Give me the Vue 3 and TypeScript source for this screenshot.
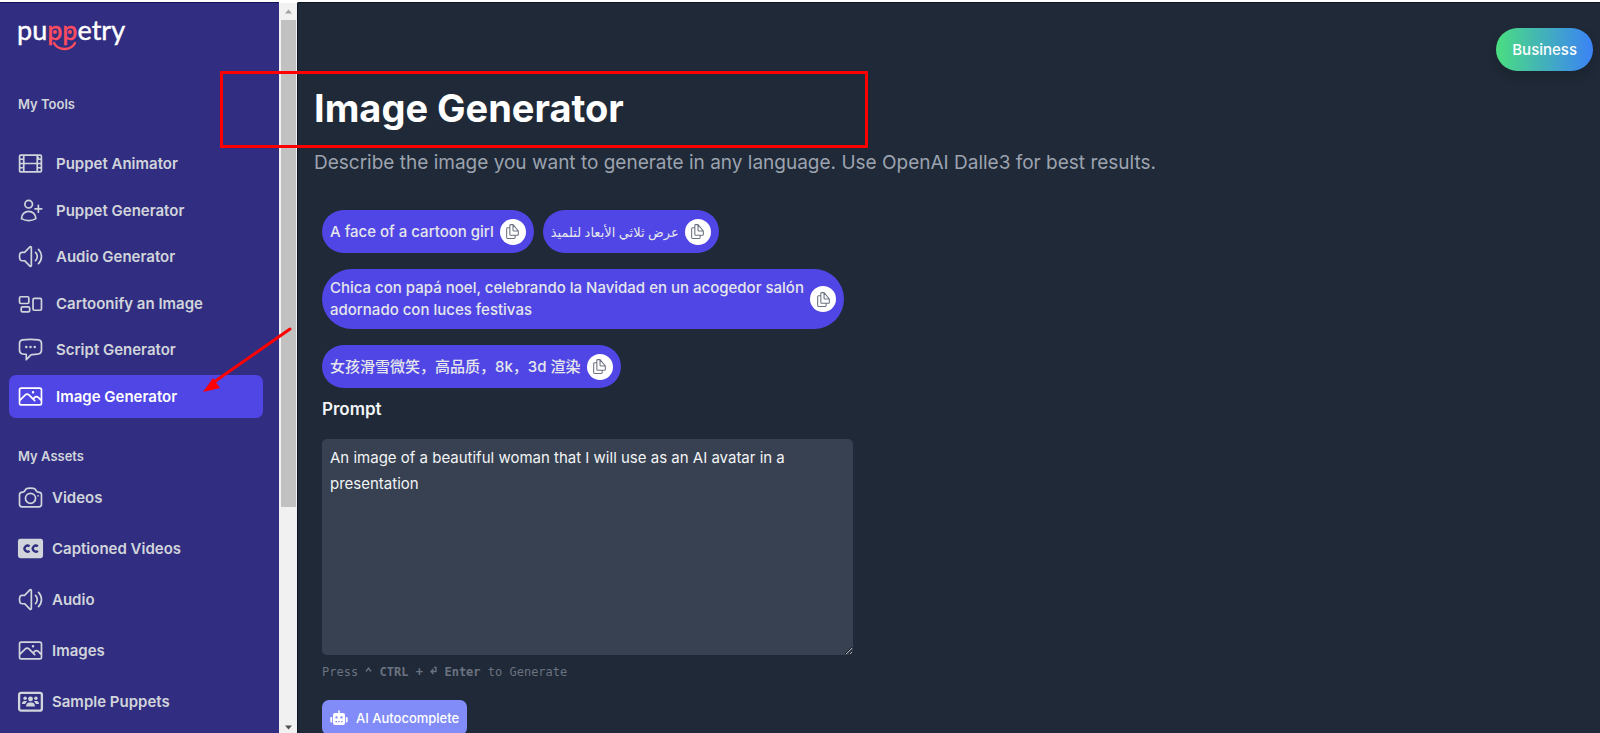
<script setup lang="ts">
import { ref } from 'vue'

interface NavItem {
  label: string
  icon: string
}

interface Suggestion {
  text: string
  lang: string
}

const tools: NavItem[] = [
  { label: 'Puppet Animator', icon: 'film' },
  { label: 'Puppet Generator', icon: 'userPlus' },
  { label: 'Audio Generator', icon: 'speaker' },
  { label: 'Cartoonify an Image', icon: 'group' },
  { label: 'Script Generator', icon: 'chat' },
  { label: 'Image Generator', icon: 'photo' },
]

const assets: NavItem[] = [
  { label: 'Videos', icon: 'camera' },
  { label: 'Captioned Videos', icon: 'captions' },
  { label: 'Audio', icon: 'speaker' },
  { label: 'Images', icon: 'photo' },
  { label: 'Sample Puppets', icon: 'people' },
]

const outlines: Record<string, string> = {
  film: 'M3.4 19.5h17.2M3.4 19.5a1.1 1.1 0 0 1-1.1-1.1M3.4 19.5h1.5c.6 0 1.1-.5 1.1-1.1M2.3 18.4V5.6m0 12.8v-1.5c0-.6.5-1.1 1.1-1.1m17.2 3.7a1.1 1.1 0 0 0 1.1-1.1m-1.1 1.1h-1.5a1.1 1.1 0 0 1-1.1-1.1m3.7 0V5.6m0 12.8v-1.5c0-.6-.5-1.1-1.1-1.1M21.7 5.6c0-.6-.5-1.1-1.1-1.1H3.4c-.6 0-1.1.5-1.1 1.1m19.4 0v1.5c0 .6-.5 1.1-1.1 1.1M2.3 5.6v1.5c0 .6.5 1.1 1.1 1.1m0 0h1.5m-1.5 0c-.6 0-1.1.5-1.1 1.1v1.6c0 .6.5 1.1 1.1 1.1m1.5-3.8c.6 0 1.1-.5 1.1-1.1V5.6M4.9 8.2c.6 0 1.1.5 1.1 1.1v1.6c0 .6-.5 1.1-1.1 1.1M6 5.6v5.3m0-5.3c0-.6.5-1.1 1.1-1.1M6 10.9c0 .6.5 1.1 1.1 1.1M6 10.9c0 .6-.5 1.1-1.1 1.1M6 10.9v2.2m1.1-8.6h9.8M18 5.6v5.3M7.1 12h9.8m-9.8 0c-.6 0-1.1.5-1.1 1.1M18 10.9c0 .6-.5 1.1-1.1 1.1M18 10.9c0 .6.5 1.1 1.1 1.1M18 5.6c0 .6.5 1.1 1.1 1.1M18 10.9v2.2m2.6-4.9h-1.5m1.5 0c.6 0 1.1.5 1.1 1.1v1.6c0 .6-.5 1.1-1.1 1.1m-1.5-3.8c-.6 0-1.1.5-1.1 1.1v1.6c0 .6.5 1.1 1.1 1.1m1.5 0h-1.5M3.4 12h1.5m-1.5 0c-.6 0-1.1.5-1.1 1.1v1.6c0 .6.5 1.1 1.1 1.1M4.9 12c.6 0 1.1.5 1.1 1.1m0 5.3v-5.3m0 5.3c0 .6.5 1.1 1.1 1.1M6 13.1v1.6c0 .6-.5 1.1-1.1 1.1m12-3.8c.6 0 1.1.5 1.1 1.1v5.3m0 0c0 .6-.5 1.1-1.1 1.1m3.7-7.5c.6 0 1.1.5 1.1 1.1v1.6c0 .6-.5 1.1-1.1 1.1m0-3.8h-1.5c-.6 0-1.1.5-1.1 1.1v1.6c0 .6.5 1.1 1.1 1.1h1.5M3.4 15.8h1.5',
  userPlus: 'M19 7.5v3m0 0v3m0-3h3m-3 0h-3m-2.25-4.125a3.375 3.375 0 1 1-6.75 0 3.375 3.375 0 0 1 6.75 0ZM4 19.235v-.11a6.375 6.375 0 0 1 12.75 0v.109A12.318 12.318 0 0 1 10.374 21c-2.331 0-4.512-.645-6.374-1.766Z',
  speaker: 'M19.114 5.636a9 9 0 0 1 0 12.728M16.463 8.288a5.25 5.25 0 0 1 0 7.424M6.75 8.25l4.72-4.72a.75.75 0 0 1 1.28.53v15.88a.75.75 0 0 1-1.28.53l-4.72-4.72H4.51c-.88 0-1.704-.507-1.938-1.354A9.009 9.009 0 0 1 2.25 12c0-.83.112-1.633.322-2.396C2.806 8.756 3.63 8.25 4.51 8.25H6.75Z',
  group: 'M2.25 7.125C2.25 6.504 2.754 6 3.375 6h6c.621 0 1.125.504 1.125 1.125v3.75c0 .621-.504 1.125-1.125 1.125h-6a1.125 1.125 0 0 1-1.125-1.125v-3.75ZM14.25 8.625c0-.621.504-1.125 1.125-1.125h5.25c.621 0 1.125.504 1.125 1.125v8.25c0 .621-.504 1.125-1.125 1.125h-5.25a1.125 1.125 0 0 1-1.125-1.125v-8.25ZM3.75 16.125c0-.621.504-1.125 1.125-1.125h5.25c.621 0 1.125.504 1.125 1.125v2.25c0 .621-.504 1.125-1.125 1.125h-5.25a1.125 1.125 0 0 1-1.125-1.125v-2.25Z',
  chat: 'M8.625 9.75a.375.375 0 1 1-.75 0 .375.375 0 0 1 .75 0Zm0 0H8.25m4.125 0a.375.375 0 1 1-.75 0 .375.375 0 0 1 .75 0Zm0 0H12m4.125 0a.375.375 0 1 1-.75 0 .375.375 0 0 1 .75 0Zm0 0h-.375m-13.5 3.01c0 1.6 1.123 2.994 2.707 3.227 1.087.16 2.185.283 3.293.369V21l4.184-4.183a1.14 1.14 0 0 1 .778-.332 48.294 48.294 0 0 0 5.83-.498c1.585-.233 2.708-1.626 2.708-3.228V6.741c0-1.602-1.123-2.995-2.707-3.228A48.394 48.394 0 0 0 12 3c-2.392 0-4.744.175-7.043.513C3.373 3.746 2.25 5.14 2.25 6.741v6.018Z',
  photo: 'm2.25 15.75 5.159-5.159a2.25 2.25 0 0 1 3.182 0l5.159 5.159m-1.5-1.5 1.409-1.409a2.25 2.25 0 0 1 3.182 0l2.909 2.909m-18 3.75h16.5a1.5 1.5 0 0 0 1.5-1.5V6a1.5 1.5 0 0 0-1.5-1.5H3.75A1.5 1.5 0 0 0 2.25 6v12a1.5 1.5 0 0 0 1.5 1.5Zm10.5-11.25h.008v.008h-.008V8.25Zm.375 0a.375.375 0 1 1-.75 0 .375.375 0 0 1 .75 0Z',
  camera: 'M6.827 6.175A2.31 2.31 0 0 1 5.186 7.23c-.38.054-.757.112-1.134.175C2.999 7.58 2.25 8.507 2.25 9.574V18a2.25 2.25 0 0 0 2.25 2.25h15A2.25 2.25 0 0 0 21.75 18V9.574c0-1.067-.75-1.994-1.802-2.169a47.865 47.865 0 0 0-1.134-.175 2.31 2.31 0 0 1-1.64-1.055l-.822-1.316a2.192 2.192 0 0 0-1.736-1.039 48.774 48.774 0 0 0-5.232 0 2.192 2.192 0 0 0-1.736 1.039l-.821 1.316ZM16.5 12.75a4.5 4.5 0 1 1-9 0 4.5 4.5 0 0 1 9 0ZM18.75 10.5h.008v.008h-.008V10.5Z',
}

const suggestions: Suggestion[] = [
  { text: 'A face of a cartoon girl', lang: 'en' },
  { text: 'عرض ثلاثي الأبعاد لتلميذ', lang: 'ar' },
  { text: 'Chica con papá noel, celebrando la Navidad en un acogedor salón adornado con luces festivas', lang: 'es' },
  { text: '女孩滑雪微笑，高品质，8k，3d 渲染', lang: 'zh' },
]

const active = ref('Image Generator')
const prompt = ref('An image of a beautiful woman that I will use as an AI avatar in a presentation')
</script>

<template>
  <div class="app">
    <aside class="sidebar">
      <a class="logo" href="#" aria-label="puppetry">
        <svg width="116" height="46" viewBox="0 0 116 46">
          <text x="0" y="31" class="word">pu<tspan class="accent">pp</tspan>etry</text>
          <path d="M37 34c4 8 17 8 21 0" fill="none" stroke="#ff4d5e" stroke-width="2.4" stroke-linecap="round" />
          <circle cx="38" cy="23" r="2" fill="#ff4d5e" />
          <circle cx="53" cy="23" r="2" fill="#ff4d5e" />
        </svg>
      </a>

      <h2 class="group-title">My Tools</h2>
      <nav class="tools" aria-label="My Tools">
        <a
          v-for="item in tools"
          :key="item.label"
          href="#"
          class="nav-item"
          :class="{ active: item.label === active }"
          @click.prevent="active = item.label"
        >
          <svg class="icon" viewBox="0 0 24 24"><path :d="outlines[item.icon]" /></svg>
          <span>{{ item.label }}</span>
        </a>
      </nav>

      <h2 class="group-title assets-title">My Assets</h2>
      <nav class="assets" aria-label="My Assets">
        <a v-for="item in assets" :key="item.label" href="#" class="nav-item asset">
          <svg v-if="item.icon === 'captions'" class="icon solid" viewBox="0 0 28 28">
            <rect x="1" y="4" width="26" height="20" rx="2.5" fill="#d1d5db" />
            <g fill="none" stroke="#312e81" stroke-width="2.4">
              <path d="M13 11.8a3.1 3.1 0 1 0 0 4.6M21.6 11.8a3.1 3.1 0 1 0 0 4.6" />
            </g>
          </svg>
          <svg v-else-if="item.icon === 'people'" class="icon solid" viewBox="0 0 28 28">
            <rect x="2.2" y="5" width="23.6" height="18.4" rx="2" fill="none" stroke="#d1d5db" stroke-width="2.4" />
            <g fill="#d1d5db">
              <circle cx="14" cy="11.4" r="2.5" />
              <circle cx="8.4" cy="10.6" r="1.8" />
              <circle cx="19.6" cy="10.6" r="1.8" />
              <path d="M9.4 19.2c0-2.6 1.4-4.2 3.4-4.2h2.4c2 0 3.4 1.6 3.4 4.2z" />
              <path d="M5.2 16.6c0-2 .9-3.2 2.5-3.2h1.4c.7 0 1.2.3 1.6.7-1.2.5-1.9 1.4-2.2 2.5z" />
              <path d="M22.8 16.6c0-2-.9-3.2-2.5-3.2h-1.4c-.7 0-1.2.3-1.6.7 1.2.5 1.9 1.4 2.2 2.5z" />
            </g>
          </svg>
          <svg v-else class="icon" viewBox="0 0 24 24"><path :d="outlines[item.icon]" /></svg>
          <span>{{ item.label }}</span>
        </a>
      </nav>
    </aside>

    <div class="scrollbar" aria-hidden="true">
      <svg class="cap" viewBox="0 0 15 16"><path d="M4 10h7l-3.5-4z" fill="#a3a3a3" /></svg>
      <div class="track"><div class="thumb"></div></div>
      <svg class="cap" viewBox="0 0 15 16"><path d="M4 9h7l-3.5 4z" fill="#505050" /></svg>
    </div>

    <main class="main">
      <header class="topbar">
        <button type="button" class="plan">Business</button>
      </header>
      <h1>Image Generator</h1>
      <p class="lead">Describe the image you want to generate in any language. Use OpenAI Dalle3 for best results.</p>

      <form class="form" @submit.prevent>
        <div class="chips">
          <div v-for="s in suggestions" :key="s.lang" class="chip">
            <span :lang="s.lang">{{ s.text }}</span>
            <button type="button" class="copy" aria-label="Copy" @click="prompt = s.text">
              <svg viewBox="0 0 24 24">
                <path d="M15.75 17.25v3.375c0 .621-.504 1.125-1.125 1.125h-9.75a1.125 1.125 0 0 1-1.125-1.125V7.875c0-.621.504-1.125 1.125-1.125H6.75a9.06 9.06 0 0 1 1.5.124m7.5 10.376h3.375c.621 0 1.125-.504 1.125-1.125V11.25L12.75 2.25H9.375c-.621 0-1.125.504-1.125 1.125v12.75c0 .621.504 1.125 1.125 1.125h6.375M12.75 2.25v7.875c0 .621.504 1.125 1.125 1.125h6.375" />
              </svg>
            </button>
          </div>
        </div>

        <label class="prompt-label" for="prompt">Prompt</label>
        <textarea id="prompt" v-model="prompt" spellcheck="false"></textarea>

        <p class="hint">
          Press&#32;<svg viewBox="0 0 7 10"><path d="M1 5.500 3.500 2 6 5.500" /></svg>
          {{ ' ' }}<b>CTRL</b>{{ ' ' }}<b>+</b>{{ ' ' }}<svg viewBox="0 0 7 10"><path d="M4 1.500h2V5.500H1M3.500 3 1 5.500 3.500 8" /></svg>
          {{ ' ' }}<b>Enter</b> to Generate
        </p>

        <button type="button" class="auto">
          <svg viewBox="0 0 18 16">
            <path
              fill="#fff"
              fill-rule="evenodd"
              d="M8.2 1a.8.8 0 0 1 1.6 0v2H13a2 2 0 0 1 2 2v8a2 2 0 0 1-2 2H5a2 2 0 0 1-2-2V5a2 2 0 0 1 2-2h3.2zM6.5 6.2a1.2 1.2 0 1 0 0 2.4 1.2 1.2 0 0 0 0-2.4zm5 0a1.2 1.2 0 1 0 0 2.4 1.2 1.2 0 0 0 0-2.4zM5.5 11v1.3H7V11zm2.75 0v1.3h1.5V11zM11 11v1.3h1.5V11zM2.200 7v5.500h-.7A1.200 1.200 0 0 1 .3 11.300V8.200A1.200 1.200 0 0 1 1.500 7zm13.600 0h.7a1.200 1.200 0 0 1 1.200 1.200v3.100a1.200 1.200 0 0 1-1.200 1.200h-.7z"
            />
          </svg>
          AI Autocomplete
        </button>
      </form>
    </main>

    <div class="callout" aria-hidden="true"></div>
    <svg class="arrow" viewBox="0 0 92 70" aria-hidden="true">
      <path d="M88 4 12 57" stroke="#f00" stroke-width="3" stroke-linecap="round" />
      <path d="M1 67 11 53 18 63z" fill="#f00" />
    </svg>
  </div>
</template>

<style>
html,
body {
  margin: 0;
  overflow: hidden;
}
</style>

<style scoped>
.app {
  position: relative;
  display: flex;
  height: 100vh;
  box-sizing: border-box;
  overflow: hidden;
  border-top: 2px solid #fff;
  background: #1f2937;
  color: #e5e7eb;
  font-family: Inter, "Noto Sans CJK SC", "DejaVu Sans", sans-serif;
  font-size: 15px;
}

a {
  color: inherit;
  text-decoration: none;
}

button {
  border: 0;
  font: inherit;
  cursor: pointer;
}

.sidebar {
  display: flex;
  flex: none;
  flex-direction: column;
  width: 279px;
  padding: 6px 16px 0 9px;
  box-sizing: border-box;
  overflow: hidden;
  border-top: 1px solid #15125c;
  background: #312e81;
  color: #d1d5db;
}

.logo {
  height: 44px;
  margin-left: 8px;
}

.word {
  font-family: Lato, sans-serif;
  font-size: 27px;
  fill: #fff;
  stroke: #fff;
  stroke-width: 0.4px;
}

.accent {
  fill: #ff4d5e;
  stroke: #ff4d5e;
}

.group-title {
  margin: 41px 0 0 9px;
  font-size: 13px;
  font-weight: 600;
  line-height: 20px;
}

.tools {
  display: flex;
  flex-direction: column;
  justify-content: space-between;
  height: 276px;
  margin-top: 28px;
}

.nav-item {
  display: flex;
  align-items: center;
  gap: 12px;
  height: 43px;
  padding: 0 8px;
  border-radius: 7px;
  font-weight: 600;
}

.nav-item.active {
  background: #4f46e5;
  color: #fff;
}

.assets-title {
  margin-top: 28px;
}

.assets {
  display: flex;
  flex-direction: column;
  gap: 8px;
  margin-top: 10px;
}

.nav-item.asset {
  gap: 8px;
}

.icon {
  flex: none;
  width: 27px;
  height: 27px;
}

.icon:not(.solid) path {
  fill: none;
  stroke: currentColor;
  stroke-width: 1.5;
  stroke-linecap: round;
  stroke-linejoin: round;
}

.scrollbar {
  display: flex;
  flex: none;
  flex-direction: column;
  width: 15px;
  padding: 0 1px 0 2px;
  border-right: 1px solid #0d1526;
  border-top: 1px solid #fff;
  background: #f1f1f1;
}

.cap {
  width: 15px;
  height: 17px;
}

.track {
  flex: 1;
}

.thumb {
  height: 70%;
  background: #c1c1c1;
}

.main {
  flex: 1;
  min-width: 0;
  padding: 25px 7px 0 16px;
  border-top: 1px solid #0b1220;
}

.topbar {
  display: flex;
  justify-content: flex-end;
}

.plan {
  height: 43px;
  padding: 0 16px;
  border-radius: 22px;
  background: linear-gradient(90deg, #4ade80, #3b82f6);
  box-shadow: 0 6px 12px rgba(0, 0, 0, 0.14);
  color: #fff;
  font-weight: 500;
}

h1 {
  margin: 15px 0 0;
  color: #fff;
  font-size: 38px;
  font-weight: 700;
  line-height: 44px;
}

.lead {
  margin: 18px 0 0;
  color: #9ca3af;
  font-size: 19px;
  line-height: 30px;
}

.form {
  width: 531px;
  margin: 32px 0 0 8px;
}

.chips {
  display: flex;
  flex-wrap: wrap;
  gap: 16px 9px;
}

.chip {
  display: flex;
  align-items: center;
  gap: 6px;
  max-width: 522px;
  min-height: 43px;
  padding: 8px;
  box-sizing: border-box;
  border-radius: 30px;
  background: #4f46e5;
  font-weight: 500;
  line-height: 22px;
}

.chip [lang='ar'] {
  font-size: 13px;
}

.copy {
  display: flex;
  flex: none;
  align-items: center;
  justify-content: center;
  width: 26px;
  height: 26px;
  padding: 0;
  border-radius: 50%;
  background: #fff;
}

.copy svg {
  width: 17px;
  height: 17px;
  fill: none;
  stroke: #6b7280;
  stroke-width: 1.5;
  stroke-linecap: round;
  stroke-linejoin: round;
}

.prompt-label {
  display: block;
  margin-top: 9px;
  color: #f3f4f6;
  font-size: 17px;
  font-weight: 600;
  line-height: 24px;
}

textarea {
  display: block;
  width: 100%;
  height: 216px;
  margin-top: 18px;
  padding: 6px 8px;
  box-sizing: border-box;
  border: 0;
  border-radius: 5px;
  outline: 0;
  background: #374151;
  color: #f3f4f6;
  font: inherit;
  line-height: 26px;
}

.hint {
  margin: 9px 0 0;
  color: #6b7280;
  font-family: "DejaVu Sans Mono", monospace;
  font-size: 12px;
  line-height: 17px;
}

.hint svg {
  width: 7px;
  height: 10px;
  fill: none;
  stroke: currentColor;
  stroke-width: 1.3;
}

.auto {
  display: flex;
  align-items: center;
  gap: 8px;
  height: 35px;
  margin-top: 19px;
  padding: 0 8px;
  border-radius: 7px;
  background: #818cf8;
  color: #fff;
  font-size: 13px;
  font-weight: 500;
}

.auto svg {
  width: 18px;
  height: 16px;
}

.callout {
  position: absolute;
  top: 69px;
  left: 220px;
  width: 642px;
  height: 71px;
  border: 3px solid #f00;
}

.arrow {
  position: absolute;
  top: 323px;
  left: 202px;
  width: 92px;
  height: 70px;
}
</style>
